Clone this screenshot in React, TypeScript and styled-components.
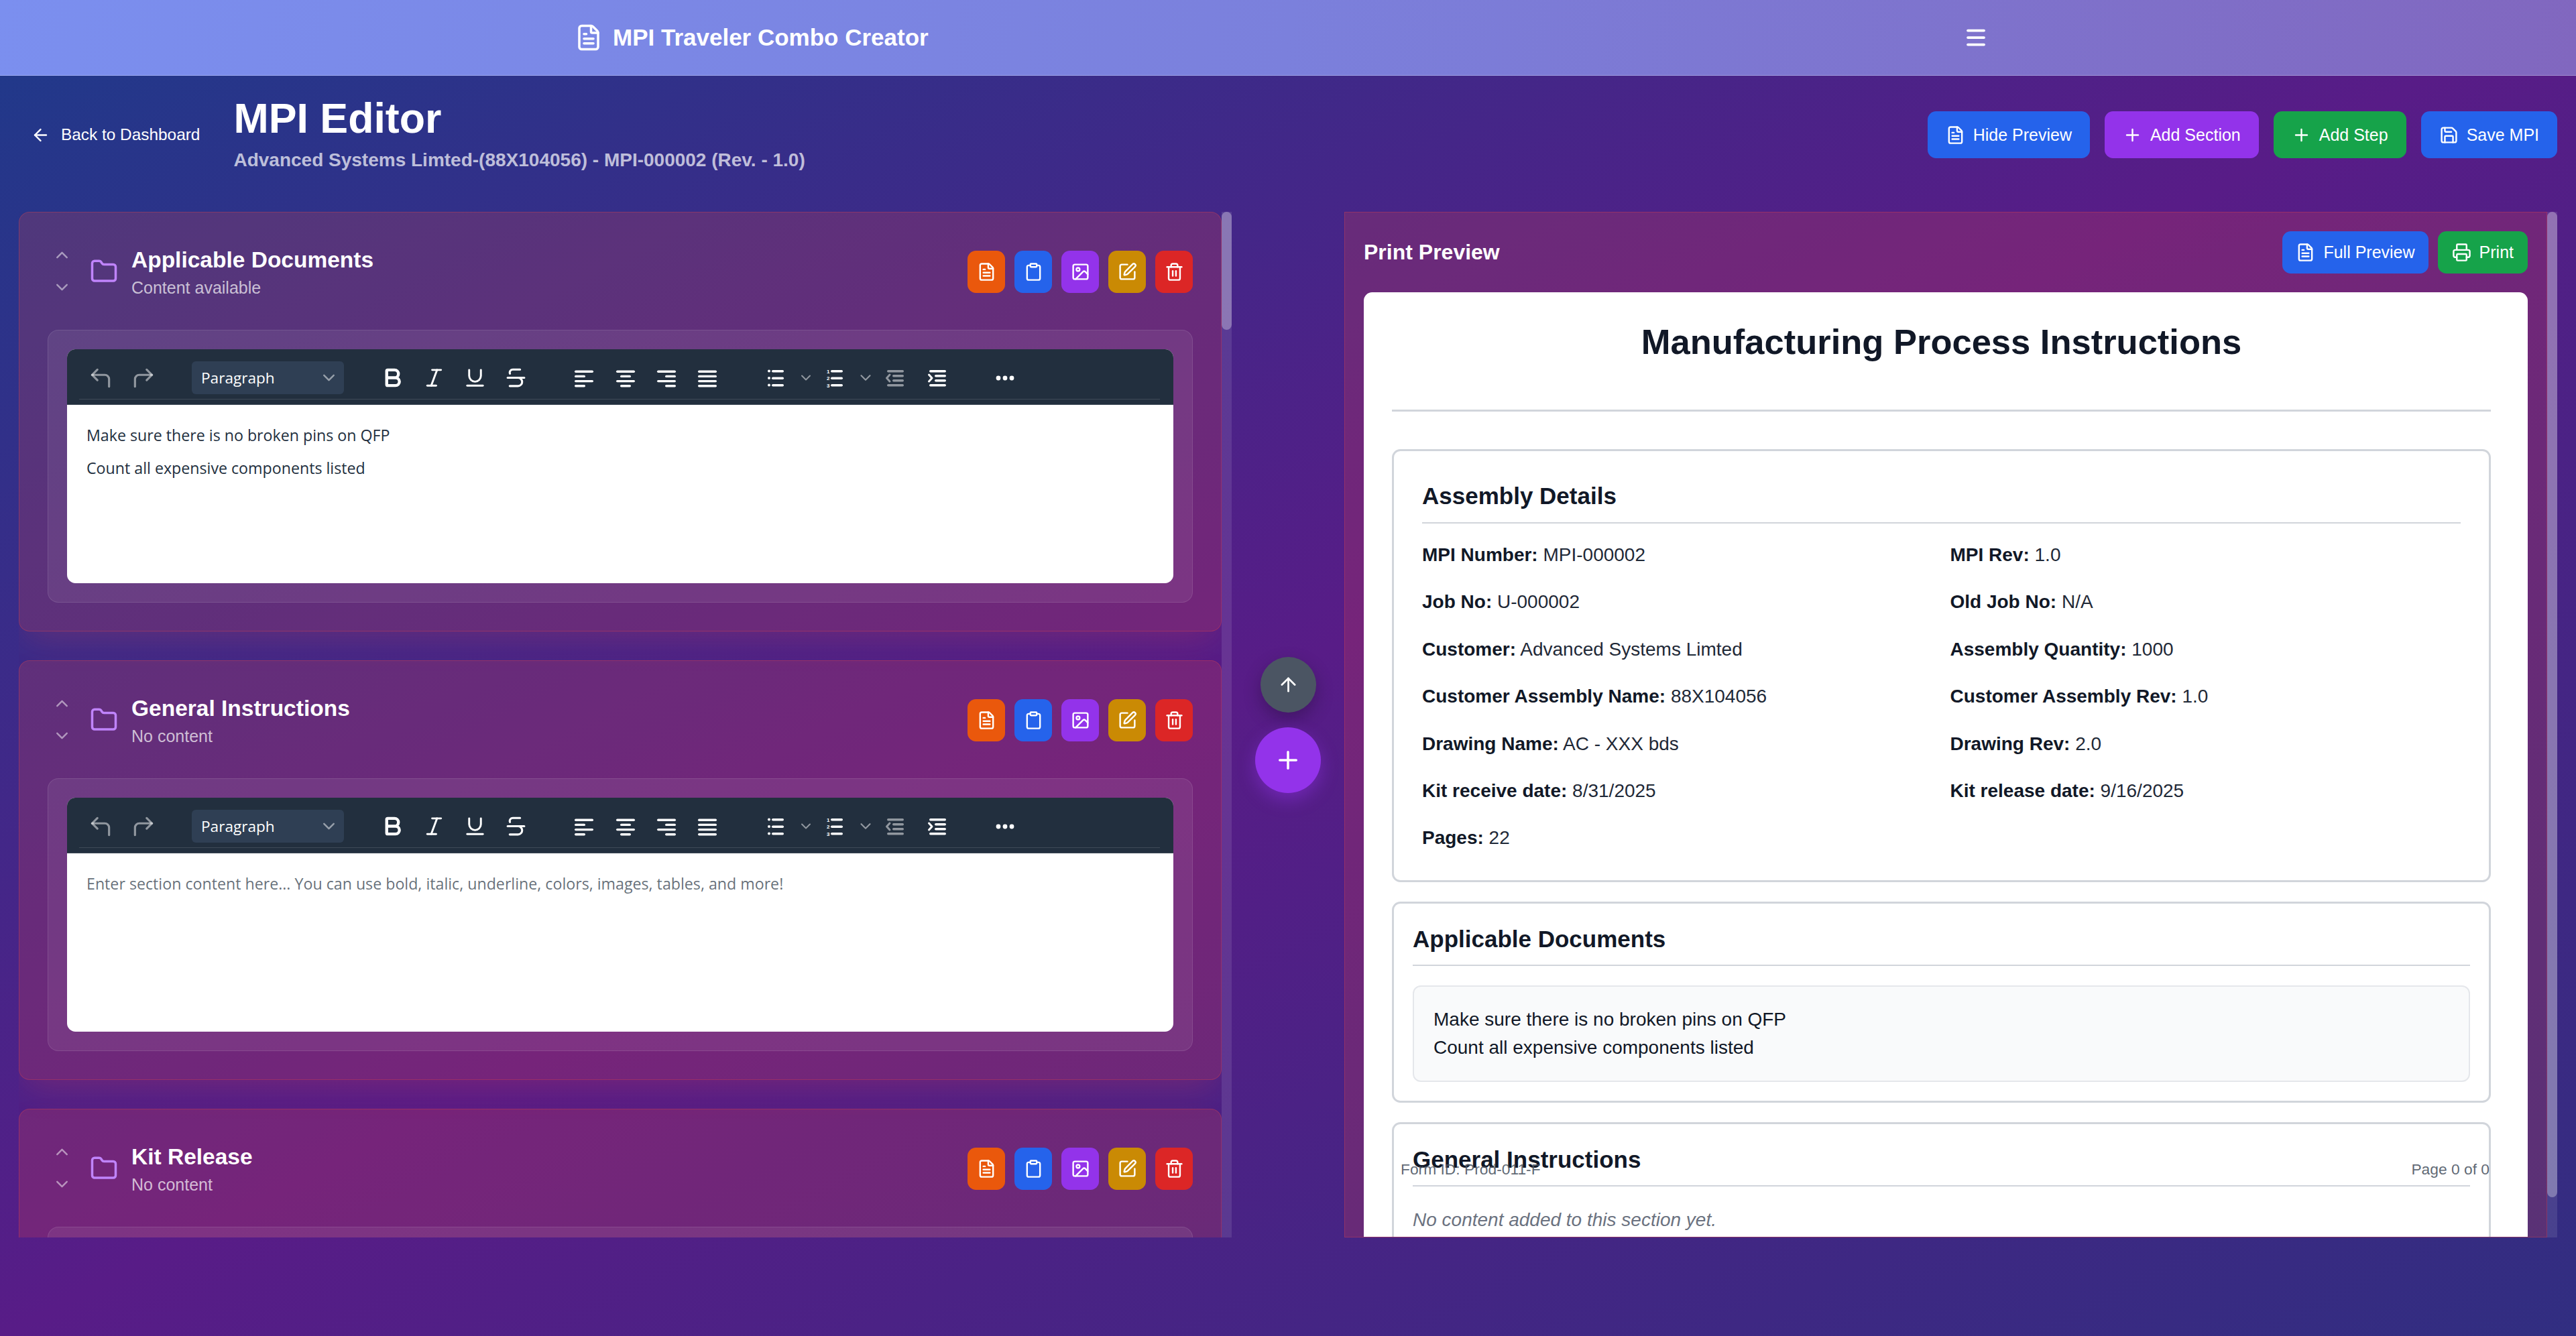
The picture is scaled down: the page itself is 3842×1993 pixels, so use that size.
import React from 'react';
import styled, { createGlobalStyle } from 'styled-components';
import {
  ArrowLeft,
  ArrowUp,
  Bold,
  ChevronDown,
  ChevronUp,
  Clipboard,
  CornerUpLeft,
  CornerUpRight,
  FileText,
  Folder,
  Image as ImageIcon,
  Italic,
  Menu,
  Plus,
  Printer,
  Save,
  SquarePen,
  Strikethrough,
  Trash2,
  Underline,
} from 'lucide-react';

const GlobalStyle = createGlobalStyle`
  * { box-sizing: border-box; }
  html, body { margin: 0; padding: 0; }
  body {
    font-family: "Liberation Sans", Arial, sans-serif;
    color: #fff;
  }
`;

const Page = styled.div`
  width: 3842px;
  height: 1993px;
  overflow: hidden;
  background: linear-gradient(to bottom right, #1e3a8a, #581c87, #312e81);
`;

const TopBar = styled.header`
  height: 113px;
  display: flex;
  align-items: center;
  justify-content: space-between;
  padding: 0 877px 0 857px;
  background: linear-gradient(100deg, #7b8fef 0%, #7b80dc 50%, #8167bf 100%);
  border-bottom: 1px solid rgba(255, 255, 255, 0.25);
`;
const Brand = styled.div`
  display: flex;
  align-items: center;
  gap: 15px;
  font-size: 35px;
  font-weight: 700;
`;

const TitleRow = styled.div`
  height: 203px;
  padding: 25px 28px 52px 46px;
  display: flex;
  align-items: center;
`;
const BackLink = styled.a`
  display: flex;
  align-items: center;
  gap: 16px;
  font-size: 24.4px;
  margin-right: 50px;
`;
const TitleBlock = styled.div`
  flex: 1;
  margin-top: -3px;
`;
const PageTitle = styled.h1`
  margin: 0 0 4px;
  font-size: 62.7px;
  line-height: 75px;
  font-weight: 700;
`;
const PageSub = styled.p`
  margin: 0;
  font-size: 28px;
  line-height: 42px;
  font-weight: 700;
  color: rgba(255, 255, 255, 0.7);
`;
const Actions = styled.div<{ $gap: number }>`
  display: flex;
  gap: ${(p) => p.$gap}px;
`;
const Button = styled.button<{ $bg: string; $h: number; $px: number }>`
  height: ${(p) => p.$h}px;
  padding: 0 ${(p) => p.$px}px;
  display: flex;
  align-items: center;
  gap: 12px;
  border: 0;
  border-radius: 12.5px;
  background: ${(p) => p.$bg};
  color: #fff;
  font-family: inherit;
  font-size: 25px;
`;

const Columns = styled.main`
  display: grid;
  grid-template-columns: 1809px 168px 1809px;
  grid-template-rows: 1530px;
  margin: 0 28px;
`;
const ScrollColumn = styled.div`
  display: flex;
  height: 1530px;
  min-width: 0;
`;
const Track = styled.div`
  width: 15px;
  flex: none;
  background: rgba(255, 255, 255, 0.1);
`;
const Thumb = styled.div<{ $h: number }>`
  height: ${(p) => p.$h}px;
  border-radius: 8px;
  background: rgba(255, 255, 255, 0.3);
`;

const CardList = styled.div`
  flex: 1;
  min-width: 0;
  overflow: hidden;
  display: flex;
  flex-direction: column;
  gap: 43px;
`;
const Card = styled.section`
  flex: none;
  padding: 42px;
  border: 1px solid rgba(239, 68, 68, 0.3);
  border-radius: 16px;
  background: rgba(239, 68, 68, 0.2);
  box-shadow: 0 21px 50px -12px rgba(239, 68, 68, 0.22);
`;
const CardHead = styled.div`
  height: 92px;
  margin-bottom: 41px;
  display: flex;
  align-items: center;
`;
const MoveButtons = styled.div`
  display: flex;
  flex-direction: column;
  gap: 5px;
  margin-right: 21px;
  margin-top: -2px;
`;
const MoveButton = styled.span`
  width: 42px;
  height: 43px;
  display: flex;
  align-items: center;
  justify-content: center;
  color: rgba(255, 255, 255, 0.5);
`;
const FolderIcon = styled(Folder)`
  flex: none;
  color: #c084fc;
  margin-right: 20px;
`;
const CardText = styled.div`
  flex: 1;
  margin-top: -2px;
`;
const CardTitle = styled.h3`
  margin: 0;
  font-size: 33.5px;
  line-height: 50px;
  font-weight: 700;
`;
const CardStatus = styled.p`
  margin: 0;
  font-size: 25px;
  line-height: 33px;
  color: rgba(255, 255, 255, 0.7);
`;
const ActionButtons = styled.div`
  display: flex;
  gap: 14px;
`;
const ActionButton = styled.button<{ $bg: string }>`
  width: 56px;
  height: 63px;
  padding: 0;
  display: flex;
  align-items: center;
  justify-content: center;
  border: 0;
  border-radius: 12.5px;
  background: ${(p) => p.$bg};
  color: #fff;
`;
const EditorBox = styled.div<{ $empty?: boolean }>`
  padding: 28px;
  height: ${(p) => (p.$empty ? '200px' : '407px')};
  border: 1px solid rgba(255, 255, 255, 0.1);
  border-radius: 16px;
  background: rgba(255, 255, 255, 0.07);
`;
const Editor = styled.div`
  height: 349px;
  border-radius: 12.5px;
  overflow: hidden;
  background: #fff;
`;
const Toolbar = styled.div`
  height: 83px;
  background: #222f3e;
  border-bottom: 1px solid #3f4a57;
`;
const ToolRow = styled.div`
  height: 75px;
  margin: 0 20px 0 18px;
  padding-top: 18px;
  display: flex;
  align-items: flex-start;
  border-bottom: 1px solid #3f4a57;
`;
const Tool = styled.span<{ $w?: number; $ml?: number; $off?: boolean }>`
  flex: none;
  width: ${(p) => p.$w ?? 61.4}px;
  height: 49px;
  margin-left: ${(p) => p.$ml ?? 0}px;
  display: flex;
  align-items: center;
  justify-content: center;
  color: ${(p) => (p.$off ? 'rgba(255,255,255,0.5)' : '#fff')};
`;
const BlockSelect = styled.div`
  flex: none;
  width: 227px;
  height: 49px;
  margin-left: 40px;
  padding: 0 8px 0 14px;
  display: flex;
  align-items: center;
  justify-content: space-between;
  border-radius: 6px;
  background: #2f3f54;
  font-family: "Open Sans", sans-serif;
  font-size: 22.6px;
  color: #fff;
`;
const SelectChevron = styled(ChevronDown)`
  color: rgba(255, 255, 255, 0.5);
`;
const EditorBody = styled.div`
  padding: 22px 29px;
  font-family: "Open Sans", sans-serif;
  font-size: 23.2px;
  color: #222f3e;
`;
const EditorLine = styled.p`
  margin: 0;
  height: 49px;
  line-height: 46px;
`;
const Placeholder = styled(EditorLine)`
  color: rgba(34, 47, 62, 0.7);
`;

const Middle = styled.div`
  display: flex;
  flex-direction: column;
  align-items: center;
  justify-content: center;
  gap: 22px;
`;
const RoundButton = styled.button<{ $size: number; $bg: string; $glow: string }>`
  width: ${(p) => p.$size}px;
  height: ${(p) => p.$size}px;
  padding: 0;
  display: flex;
  align-items: center;
  justify-content: center;
  border: 0;
  border-radius: 50%;
  background: ${(p) => p.$bg};
  color: #fff;
  box-shadow: 0 10px 26px ${(p) => p.$glow};
`;

const PrintPanel = styled.section`
  position: relative;
  flex: 1;
  min-width: 0;
  height: 100%;
  overflow: hidden;
  padding: 0 28px;
  border: 1px solid rgba(239, 68, 68, 0.3);
  background: rgba(239, 68, 68, 0.2);
`;
const PrintHead = styled.div`
  height: 119px;
  padding-top: 28px;
  display: flex;
  align-items: flex-start;
  justify-content: space-between;
`;
const PrintTitle = styled.h2`
  margin: 0;
  font-size: 32px;
  line-height: 63px;
  font-weight: 700;
`;
const Doc = styled.article`
  padding: 41px 55px 42px 42px;
  border-radius: 12.5px 12.5px 0 0;
  background: #fff;
  color: #1f2937;
  font-size: 28px;
  line-height: 42px;
`;
const DocTitle = styled.h1`
  margin: 0 0 56px;
  height: 137px;
  border-bottom: 3px solid #d1d5db;
  text-align: center;
  font-size: 52.5px;
  line-height: 65px;
  font-weight: 700;
  color: #111827;
`;
const DocBox = styled.div<{ $pad: number; $tall?: boolean }>`
  margin-bottom: 29px;
  padding: ${(p) => p.$pad}px;
  min-height: ${(p) => (p.$tall ? '400px' : '0')};
  border: 3px solid #d1d5db;
  border-radius: 12.5px;
`;
const DocHeading = styled.h3<{ $h: number }>`
  margin: 0 0 ${(p) => (p.$h === 66 ? 26 : 29)}px;
  height: ${(p) => p.$h}px;
  border-bottom: 2px solid #d1d5db;
  font-size: 35px;
  line-height: 50px;
  font-weight: 700;
  color: #111827;
`;
const DetailGrid = styled.div`
  display: grid;
  grid-template-columns: 1fr 1fr;
  column-gap: 26px;
  row-gap: 28.4px;
`;
const Label = styled.b`
  color: #111827;
`;
const ContentBox = styled.div`
  padding: 28px 29px;
  border: 2px solid #e5e7eb;
  border-radius: 12px;
  background: #f9fafb;
  color: #111827;
`;
const Empty = styled.p`
  margin: 0;
  font-style: italic;
  color: #6b7280;
`;
const DocFooter = styled.div`
  position: absolute;
  top: 1413px;
  left: 83px;
  right: 85px;
  display: flex;
  justify-content: space-between;
  font-size: 22.8px;
  line-height: 28px;
  color: rgba(75, 85, 99, 0.9);
`;

// tinymce toolbar glyphs that lucide has no match for
const Bars = ({ bars }: { bars: [number, number][] }) => (
  <svg width="50" height="50" viewBox="0 0 50 50" fill="currentColor">
    {bars.map(([x, w], i) => (
      <rect key={i} x={x} y={13.5 + i * 7.2} width={w} height={3.4} rx={1.7} />
    ))}
  </svg>
);
const ListIcon = ({ ordered }: { ordered?: boolean }) => (
  <svg width="50" height="50" viewBox="0 0 50 50" fill="currentColor">
    {[0, 1, 2].map((i) => (
      <g key={i}>
        {ordered ? (
          <text x={12} y={17.5 + i * 10.5} fontSize="8" fontWeight="700" fontFamily="Liberation Sans">
            {i + 1}
          </text>
        ) : (
          <circle cx={14} cy={14.5 + i * 10.5} r={2} />
        )}
        <rect x={18} y={13 + i * 10.5} width={18} height={3.4} rx={1.7} />
      </g>
    ))}
  </svg>
);
const IndentIcon = ({ out }: { out?: boolean }) => (
  <svg width="50" height="50" viewBox="0 0 50 50" fill="currentColor">
    <rect x={13} y={13} width={25} height={3.4} rx={1.7} />
    <rect x={21} y={20} width={17} height={3.4} rx={1.7} />
    <rect x={21} y={27} width={17} height={3.4} rx={1.7} />
    <rect x={13} y={34} width={25} height={3.4} rx={1.7} />
    <path
      d={out ? 'M17 20l-4.5 5 4.5 5' : 'M12.500 20l4.500 5-4.500 5'}
      fill="none"
      stroke="currentColor"
      strokeWidth="3"
      strokeLinecap="round"
      strokeLinejoin="round"
    />
  </svg>
);
const MoreIcon = () => (
  <svg width="50" height="50" viewBox="0 0 50 50" fill="currentColor">
    <circle cx="15" cy="25" r="3.4" />
    <circle cx="25" cy="25" r="3.4" />
    <circle cx="35" cy="25" r="3.4" />
  </svg>
);

const EditorToolbar = () => (
  <Toolbar>
    <ToolRow>
      <Tool $w={64} $off><CornerUpLeft size={38} strokeWidth={2} /></Tool>
      <Tool $w={64} $off><CornerUpRight size={38} strokeWidth={2} /></Tool>
      <BlockSelect>
        Paragraph
        <SelectChevron size={29} strokeWidth={2} />
      </BlockSelect>
      <Tool $ml={42}><Bold size={35} strokeWidth={3} /></Tool>
      <Tool><Italic size={35} strokeWidth={2} /></Tool>
      <Tool><Underline size={35} strokeWidth={2} /></Tool>
      <Tool><Strikethrough size={37} strokeWidth={2} /></Tool>
      <Tool $ml={40}><Bars bars={[[11, 28], [11, 16], [11, 28], [11, 16]]} /></Tool>
      <Tool><Bars bars={[[11, 28], [17, 16], [11, 28], [17, 16]]} /></Tool>
      <Tool><Bars bars={[[11, 28], [23, 16], [11, 28], [23, 16]]} /></Tool>
      <Tool><Bars bars={[[11, 28], [11, 28], [11, 28], [11, 28]]} /></Tool>
      <Tool $w={64} $ml={40}><ListIcon /></Tool>
      <Tool $w={24} $off><ChevronDown size={29} /></Tool>
      <Tool $w={64}><ListIcon ordered /></Tool>
      <Tool $w={26} $off><ChevronDown size={29} /></Tool>
      <Tool $w={62} $off><IndentIcon out /></Tool>
      <Tool $w={63}><IndentIcon /></Tool>
      <Tool $ml={39}><MoreIcon /></Tool>
    </ToolRow>
  </Toolbar>
);

const actionButtons = [
  { bg: '#ea580c', icon: FileText },
  { bg: '#2563eb', icon: Clipboard },
  { bg: '#9333ea', icon: ImageIcon },
  { bg: '#ca8a04', icon: SquarePen },
  { bg: '#dc2626', icon: Trash2 },
];

interface SectionProps {
  title: string;
  status: string;
  children: React.ReactNode;
}

function SectionCard({ title, status, children }: SectionProps) {
  return (
    <Card>
      <CardHead>
        <MoveButtons>
          <MoveButton><ChevronUp size={29} strokeWidth={2} /></MoveButton>
          <MoveButton><ChevronDown size={29} strokeWidth={2} /></MoveButton>
        </MoveButtons>
        <FolderIcon size={42} strokeWidth={2} />
        <CardText>
          <CardTitle>{title}</CardTitle>
          <CardStatus>{status}</CardStatus>
        </CardText>
        <ActionButtons>
          {actionButtons.map(({ bg, icon: Icon }) => (
            <ActionButton key={bg} $bg={bg}>
              <Icon size={29} strokeWidth={2} />
            </ActionButton>
          ))}
        </ActionButtons>
      </CardHead>
      {children}
    </Card>
  );
}

const details: [string, string][] = [
  ['MPI Number:', 'MPI-000002'],
  ['MPI Rev:', '1.0'],
  ['Job No:', 'U-000002'],
  ['Old Job No:', 'N/A'],
  ['Customer:', 'Advanced Systems Limted'],
  ['Assembly Quantity:', '1000'],
  ['Customer Assembly Name:', '88X104056'],
  ['Customer Assembly Rev:', '1.0'],
  ['Drawing Name:', 'AC - XXX bds'],
  ['Drawing Rev:', '2.0'],
  ['Kit receive date:', '8/31/2025'],
  ['Kit release date:', '9/16/2025'],
  ['Pages:', '22'],
];

export default function App(): JSX.Element {
  return (
    <Page>
      <GlobalStyle />
      <TopBar>
        <Brand>
          <FileText size={42} strokeWidth={2} />
          MPI Traveler Combo Creator
        </Brand>
        <Menu size={36} strokeWidth={2.5} />
      </TopBar>

      <TitleRow>
        <BackLink>
          <ArrowLeft size={29} strokeWidth={2} />
          Back to Dashboard
        </BackLink>
        <TitleBlock>
          <PageTitle>MPI Editor</PageTitle>
          <PageSub>Advanced Systems Limted-(88X104056) - MPI-000002 (Rev. - 1.0)</PageSub>
        </TitleBlock>
        <Actions $gap={22}>
          <Button $bg="#2563eb" $h={70} $px={27}><FileText size={29} />Hide Preview</Button>
          <Button $bg="#9333ea" $h={70} $px={27}><Plus size={29} />Add Section</Button>
          <Button $bg="#16a34a" $h={70} $px={27}><Plus size={29} />Add Step</Button>
          <Button $bg="#2563eb" $h={70} $px={27}><Save size={29} />Save MPI</Button>
        </Actions>
      </TitleRow>

      <Columns>
        <ScrollColumn>
          <CardList>
            <SectionCard title="Applicable Documents" status="Content available">
              <EditorBox>
                <Editor>
                  <EditorToolbar />
                  <EditorBody>
                    <EditorLine>Make sure there is no broken pins on QFP</EditorLine>
                    <EditorLine>Count all expensive components listed</EditorLine>
                  </EditorBody>
                </Editor>
              </EditorBox>
            </SectionCard>
            <SectionCard title="General Instructions" status="No content">
              <EditorBox>
                <Editor>
                  <EditorToolbar />
                  <EditorBody>
                    <Placeholder>
                      Enter section content here... You can use bold, italic, underline, colors, images, tables, and more!
                    </Placeholder>
                  </EditorBody>
                </Editor>
              </EditorBox>
            </SectionCard>
            <SectionCard title="Kit Release" status="No content">
              <EditorBox $empty />
            </SectionCard>
          </CardList>
          <Track><Thumb $h={176} /></Track>
        </ScrollColumn>

        <Middle>
          <RoundButton $size={83} $bg="#4b5563" $glow="rgba(0,0,0,0.25)">
            <ArrowUp size={33} strokeWidth={2} />
          </RoundButton>
          <RoundButton $size={98} $bg="#9333ea" $glow="rgba(147,51,234,0.45)">
            <Plus size={42} strokeWidth={2} />
          </RoundButton>
        </Middle>

        <ScrollColumn>
          <PrintPanel>
            <PrintHead>
              <PrintTitle>Print Preview</PrintTitle>
              <Actions $gap={14}>
                <Button $bg="#2563eb" $h={63} $px={20}><FileText size={29} />Full Preview</Button>
                <Button $bg="#16a34a" $h={63} $px={21}><Printer size={29} />Print</Button>
              </Actions>
            </PrintHead>
            <Doc>
              <DocTitle>Manufacturing Process Instructions</DocTitle>
              <DocBox $pad={42}>
                <DocHeading $h={66}>Assembly Details</DocHeading>
                <DetailGrid>
                  {details.map(([label, value]) => (
                    <div key={label}>
                      <Label>{label}</Label> {value}
                    </div>
                  ))}
                </DetailGrid>
              </DocBox>
              <DocBox $pad={28}>
                <DocHeading $h={65}>Applicable Documents</DocHeading>
                <ContentBox>
                  Make sure there is no broken pins on QFP
                  <br />
                  Count all expensive components listed
                </ContentBox>
              </DocBox>
              <DocBox $pad={28} $tall>
                <DocHeading $h={65}>General Instructions</DocHeading>
                <Empty>No content added to this section yet.</Empty>
              </DocBox>
            </Doc>
            <DocFooter>
              <span>Form ID: Prod-011-F</span>
              <span>Page 0 of 0</span>
            </DocFooter>
          </PrintPanel>
          <Track><Thumb $h={1470} /></Track>
        </ScrollColumn>
      </Columns>
    </Page>
  );
}
